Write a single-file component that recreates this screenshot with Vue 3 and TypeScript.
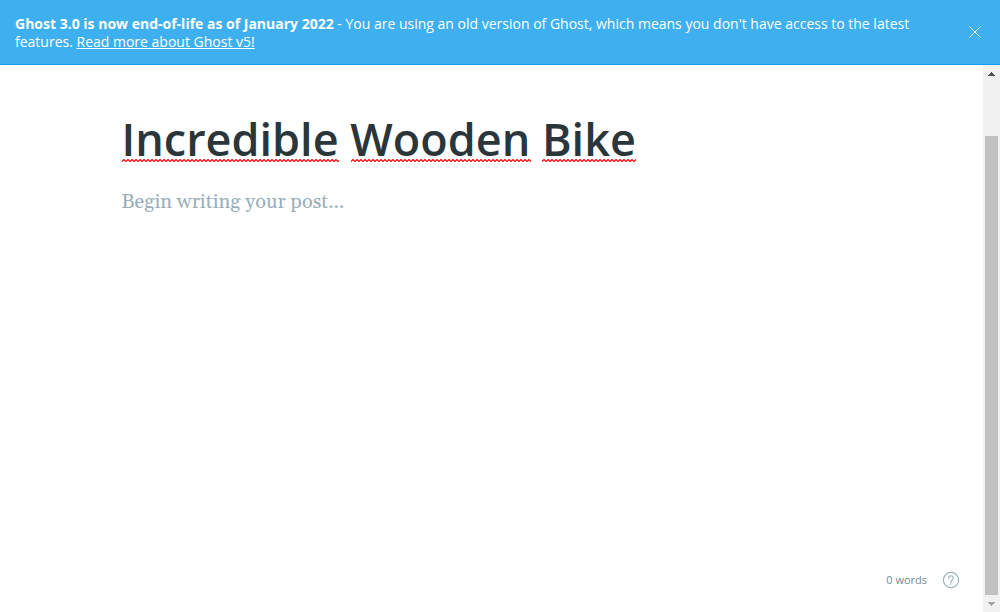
<script setup lang="ts">
import { computed, ref } from 'vue'

interface Mark {
  left: number
  width: number
}

const title = ref('Incredible Wooden Bike')
const body = ref('')
const alertOpen = ref(true)
const pen = document.createElement('canvas').getContext('2d')

const wordCount = computed(() => body.value.split(/\s+/).filter(Boolean).length)

// Spelling marks: one per word of the title, measured in the title's font.
const marks = computed<Mark[]>(() => {
  if (!pen) return []
  pen.font = '600 45px "Open Sans"'
  const found: Mark[] = []
  for (const m of title.value.matchAll(/\S+/g)) {
    found.push({
      left: Math.round(pen.measureText(title.value.slice(0, m.index)).width),
      width: Math.round(pen.measureText(m[0]).width),
    })
  }
  return found
})
</script>

<template>
  <div class="app">
    <aside v-if="alertOpen" class="alert">
      <p class="alert-text">
        <strong>Ghost 3.0 is now end-of-life as of January 2022</strong> - You are using an old version of Ghost, which
        means you don't have access to the latest features. <a href="#upgrade">Read more about Ghost v5!</a>
      </p>
      <button class="alert-close" type="button" aria-label="Close" @click="alertOpen = false">
        <svg width="12" height="12" viewBox="0 0 12 12" fill="none" stroke="currentColor" aria-hidden="true">
          <path d="M.4.4l11.2 11.2M11.6.4L.4 11.6" />
        </svg>
      </button>
    </aside>

    <div class="viewport">
      <main class="editor">
        <div class="page">
          <div class="title-box">
            <textarea v-model="title" class="title" rows="1" aria-label="Post title" spellcheck="false"></textarea>
            <svg
              v-for="mark in marks"
              :key="mark.left"
              class="mark"
              :style="{ left: mark.left + 'px', width: mark.width + 'px' }"
              aria-hidden="true"
            >
              <defs>
                <pattern id="wave" width="4" height="3" patternUnits="userSpaceOnUse">
                  <path d="M-1 3.5L2 .5L5 3.5" fill="none" stroke="#f00" stroke-width="1.2" />
                </pattern>
              </defs>
              <rect width="100%" height="3" fill="url(#wave)" />
            </svg>
          </div>
          <textarea
            v-model="body"
            class="body"
            placeholder="Begin writing your post..."
            aria-label="Post content"
          ></textarea>
        </div>
        <footer class="status">
          <span>{{ wordCount }} words</span>
          <a class="help" href="#help" aria-label="Help">
            <svg width="18" height="18" viewBox="0 0 18 18" fill="none" stroke="currentColor" aria-hidden="true">
              <circle cx="9" cy="9" r="7.6" stroke-width="1.2" />
              <path d="M6.6 7.2a2.4 2.4 0 1 1 3.5 2.1c-.7.4-1.1.8-1.1 1.7v.3" stroke-width="1.2" stroke-linecap="round" />
              <circle cx="9" cy="13" r=".8" fill="currentColor" stroke="none" />
            </svg>
          </a>
        </footer>
      </main>

      <div class="scrollbar">
        <button class="arrow up" type="button" aria-label="Scroll up">
          <svg width="7" height="4" viewBox="0 0 7 4" shape-rendering="crispEdges" aria-hidden="true">
            <path d="M3 0h1v1h1v1h1v1h1v1H0V3h1V2h1V1h1z" fill="currentColor" />
          </svg>
        </button>
        <div class="track"><div class="thumb"></div></div>
        <button class="arrow down" type="button" aria-label="Scroll down">
          <svg width="7" height="4" viewBox="0 0 7 4" shape-rendering="crispEdges" aria-hidden="true">
            <path d="M0 0h7v1H6v1H5v1H4v1H3V3H2V2H1V1H0z" fill="currentColor" />
          </svg>
        </button>
      </div>
    </div>
  </div>
</template>

<style>
html,
body,
#app {
  height: 100%;
}

body {
  margin: 0;
}
</style>

<style scoped>
.app {
  display: flex;
  flex-direction: column;
  height: 100%;
  background: #fff;
  color: #2b363b;
  font-family: "Open Sans", "Noto Sans", sans-serif;
}

.app * {
  box-sizing: border-box;
}

button {
  display: flex;
  align-items: center;
  justify-content: center;
  padding: 0;
  border: 0;
  background: none;
}

.alert {
  display: flex;
  gap: 24px;
  padding: 0 16px 0 15px;
  border-bottom: 1px solid #14a0ec;
  background: #3eb0ef;
  color: #fff;
  font-size: 14px;
  line-height: 18px;
}

.alert-text {
  flex: 1;
  margin: 0;
  padding: 15px 0 13px;
}

.alert-text a {
  color: inherit;
  text-decoration: underline;
}

.alert-close {
  width: 18px;
  color: #e2f3fd;
}

.viewport {
  display: flex;
  flex: 1;
  min-height: 0;
}

.editor {
  display: flex;
  flex: 1;
  flex-direction: column;
  min-width: 0;
}

.page {
  display: flex;
  flex: 1;
  flex-direction: column;
  width: 100%;
  max-width: 740px;
  margin: 0 auto;
  padding-top: 42px;
}

.title-box {
  position: relative;
  height: 64px;
}

textarea {
  display: block;
  width: 100%;
  padding: 0;
  border: 0;
  outline: 0;
  background: none;
  resize: none;
  overflow: hidden;
}

.title {
  height: 64px;
  color: #2b363b;
  font: 600 45px/64px "Open Sans", "Noto Sans", sans-serif;
}

.mark {
  position: absolute;
  bottom: 9px;
  height: 3px;
}

.body {
  flex: 1;
  margin-top: 15px;
  color: #2b363b;
  font: 20px/32px Gelasio, Georgia, "Liberation Serif", serif;
}

.body::placeholder {
  color: #9baeb8;
  opacity: 1;
}

.status {
  display: flex;
  align-items: center;
  justify-content: flex-end;
  gap: 15px;
  padding: 0 23px 23px;
  color: #738a94;
  font-size: 11px;
  line-height: 18px;
}

.help {
  display: flex;
  color: #9bb0bb;
}

.scrollbar {
  display: flex;
  flex-direction: column;
  width: 17px;
  background: #f1f1f1;
}

.arrow {
  width: 17px;
  height: 17px;
}

.up {
  color: #505050;
}

.down {
  color: #a3a3a3;
}

.track {
  display: flex;
  flex: 1;
  flex-direction: column;
  justify-content: flex-end;
  padding: 0 2px;
}

.thumb {
  height: 89.5%;
  background: #c1c1c1;
}
</style>
